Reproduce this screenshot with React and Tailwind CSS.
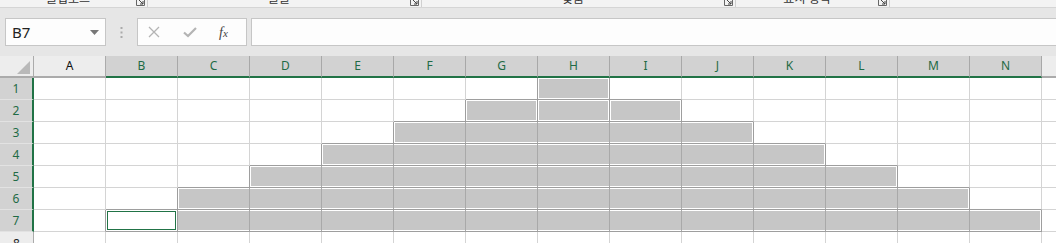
import React from "react";

const COLS = "ABCDEFGHIJKLMN".split("");

// gray runs per row: [startCol, endCol] (0 = A)
const RUNS = {
  1: [[7, 7]],
  2: [[6, 6], [7, 7], [8, 8]],
  3: [[5, 9]],
  4: [[4, 10]],
  5: [[3, 11]],
  6: [[2, 12]],
  7: [[1, 13]],
};

const isGray = (r, c) => (RUNS[r] || []).some(([a, b]) => c >= a && c <= b);

const GROUPS = [
  { label: "클립보드", w: "w-[148px]" },
  { label: "글꼴", w: "w-[274px]" },
  { label: "맞춤", w: "w-[314px]" },
  { label: "표시 형식", w: "w-[154px]" },
];

const Launcher = () => (
  <svg width="9" height="9" viewBox="0 0 9 9" className="shrink-0">
    <path d="M0.5 0.5 V8.5 H8.5 V0.5" fill="none" stroke="#666" />
    <path d="M3 3 L7 7 M4 7 H7 V4" fill="none" stroke="#444" />
  </svg>
);

const RibbonStrip = () => (
  <div className="flex h-[8px] overflow-hidden border-b border-[#d5d5d5] bg-[#f3f3f3]">
    {GROUPS.map((g) => (
      <div key={g.label} className={`${g.w} flex shrink-0 items-end`}>
        <span className="flex-1 pb-[2px] text-center text-[12px] leading-[12px] text-[#333]">
          {g.label}
        </span>
        <div className="mr-[2px] flex items-end pb-[1px]">
          <Launcher />
        </div>
        <div className="h-full w-px bg-[#d0d0d0]" />
      </div>
    ))}
  </div>
);

const FormulaBar = () => (
  <div className="flex h-[48px] items-center bg-[#e6e6e6]">
    <div className="ml-[5px] flex h-[28px] w-[101px] shrink-0 items-center justify-between border border-[#c6c6c6] bg-[#fdfdfd] pl-[6px] pr-[6px]">
      <span className="text-[15px] text-[#222]">B7</span>
      <svg width="9" height="5" viewBox="0 0 9 5">
        <path d="M0 0 H9 L4.5 5 Z" fill="#777" />
      </svg>
    </div>
    <div className="flex w-[31px] shrink-0 justify-center">
      <svg width="3" height="11" viewBox="0 0 3 11">
        <rect x="0.5" y="0" width="2" height="2" fill="#aaa" />
        <rect x="0.5" y="4.5" width="2" height="2" fill="#aaa" />
        <rect x="0.5" y="9" width="2" height="2" fill="#aaa" />
      </svg>
    </div>
    <div className="flex h-[28px] w-[110px] shrink-0 items-center border border-[#c6c6c6] bg-[#fdfdfd]">
      <svg width="12" height="12" viewBox="0 0 12 12" className="ml-[10px]">
        <path d="M1 1 L11 11 M11 1 L1 11" stroke="#b4b4b4" strokeWidth="1.3" />
      </svg>
      <svg width="14" height="12" viewBox="0 0 14 12" className="ml-[23px]">
        <path d="M1 6.5 L5 10 L13 2" fill="none" stroke="#b4b4b4" strokeWidth="2.2" />
      </svg>
      <span className="ml-[22px] font-['Liberation_Serif',serif] text-[14px] italic text-[#444]">
        f<span className="text-[11px]">x</span>
      </span>
    </div>
    <div className="ml-[4px] h-[28px] flex-1 border-y border-l border-[#c6c6c6] bg-[#fdfdfd]" />
  </div>
);

const ColumnHeaders = () => (
  <div className="flex h-[22px]">
    <div className="flex w-[34px] shrink-0 items-end justify-end border-r border-b-2 border-[#ababab] bg-[#ededed] pb-[2px] pr-[3px]">
      <svg width="13" height="13" viewBox="0 0 13 13">
        <path d="M13 0 V13 H0 Z" fill="#b9b9b9" />
      </svg>
    </div>
    {COLS.map((c, i) => (
      <div
        key={c}
        className={
          i === 0
            ? "flex w-[72px] shrink-0 items-center justify-center border-r border-b-2 border-r-[#ababab] border-b-[#ababab] bg-[#ededed] text-[12px] text-[#111]"
            : "flex w-[72px] shrink-0 items-center justify-center border-r border-b-2 border-r-[#a8a8a8] border-b-[#217346] bg-[#d2d2d2] text-[12px] text-[#1f6b45]"
        }
      >
        {c}
      </div>
    ))}
    <div className="flex-1 border-b-2 border-[#ababab] bg-[#ededed]" />
  </div>
);

const Cell = ({ r, c }) => {
  const right = isGray(r, c + 1) ? "border-r-[#9e9e9e]" : "border-r-[#d4d4d4]";
  const bottom = isGray(r + 1, c) ? "border-b-[#9e9e9e]" : "border-b-[#d4d4d4]";
  return <div className={`w-[72px] shrink-0 border-r border-b bg-white ${right} ${bottom}`} />;
};

const Run = ({ r, start, end }) => {
  const n = end - start + 1;
  const cells = [];
  for (let c = start; c <= end; c++) {
    const last = c === end;
    if (r === 7 && c === 1) {
      cells.push(
        <div key={c} className="w-[72px] shrink-0 border-r border-[#9e9e9e] bg-white p-px">
          <div className="h-full border border-[#217346]" />
        </div>
      );
    } else if (last) {
      cells.push(<div key={c} className="flex-1" />);
    } else {
      cells.push(<div key={c} className="w-[72px] shrink-0 border-r border-[#a9a9a9]" />);
    }
  }
  return (
    <div
      className="flex shrink-0 flex-col border-r border-b border-[#9e9e9e]"
      style={{ width: n * 72 }}
    >
      <div className="flex flex-1 bg-[#c6c6c6] shadow-[inset_0_0_0_1px_#fff]">{cells}</div>
    </div>
  );
};

const Row = ({ r }) => {
  const items = [];
  let c = 0;
  while (c < COLS.length) {
    const run = (RUNS[r] || []).find(([a]) => a === c);
    if (run) {
      items.push(<Run key={c} r={r} start={run[0]} end={run[1]} />);
      c = run[1] + 1;
    } else {
      items.push(<Cell key={c} r={r} c={c} />);
      c++;
    }
  }
  const selected = r <= 7;
  return (
    <div className="flex h-[22px]">
      <div
        className={
          selected
            ? "flex w-[34px] shrink-0 items-center justify-center border-r-2 border-b border-r-[#217346] border-b-[#e2e2e2] bg-[#d2d2d2] text-[12px] text-[#1f6b45]"
            : "flex w-[34px] shrink-0 items-start justify-center border-r border-b border-[#ababab] bg-[#ededed] pt-[3px] text-[12px] text-[#222]"
        }
      >
        {r}
      </div>
      {items}
      <div className="flex-1 border-b border-[#d4d4d4] bg-white" />
    </div>
  );
};

export default function App() {
  return (
    <div className="h-[243px] w-[1056px] overflow-hidden bg-white font-['Noto_Sans','Noto_Sans_CJK_KR',sans-serif]">
      <RibbonStrip />
      <FormulaBar />
      <ColumnHeaders />
      {[1, 2, 3, 4, 5, 6, 7, 8].map((r) => (
        <Row key={r} r={r} />
      ))}
    </div>
  );
}
